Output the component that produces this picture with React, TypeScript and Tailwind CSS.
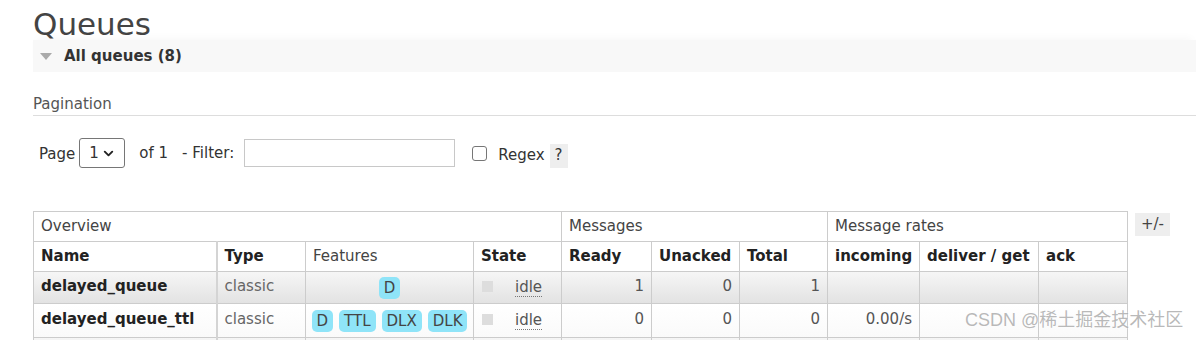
import React from "react";
import { ChevronDown } from "lucide-react";

interface QueueRow {
  name: string;
  type: string;
  features: string[];
  state: string;
  ready: string;
  unacked: string;
  total: string;
  incoming: string;
  deliver: string;
  ack: string;
}

const queues: QueueRow[] = [
  { name: "delayed_queue", type: "classic", features: ["D"], state: "idle", ready: "1", unacked: "0", total: "1", incoming: "", deliver: "", ack: "" },
  { name: "delayed_queue_ttl", type: "classic", features: ["D", "TTL", "DLX", "DLK"], state: "idle", ready: "0", unacked: "0", total: "0", incoming: "0.00/s", deliver: "", ack: "" },
];

const th = "border border-[#ccc] px-[7px] text-left align-middle";
const td = "border border-[#ccc] px-[7px] align-middle";

const App: React.FC = () => {
  return (
    <div className="relative min-h-screen w-full bg-white pl-[33px] font-['DejaVu_Sans',Verdana,sans-serif] text-[15px] text-[#444]">
      <h1 className="pt-[8px] text-[31px] leading-[32px] font-normal text-[#444]">Queues</h1>

      <div className="flex h-[32px] items-center bg-[#f8f8f8] shadow-[0_-6px_8px_-4px_#f8f8f8]">
        <span className="ml-[7px] h-0 w-0 border-x-[6px] border-t-[7px] border-x-transparent border-t-[#aaa]" />
        <span className="ml-[12px] font-bold text-[#333]">All queues (8)</span>
      </div>

      <div className="mt-[23px] border-b border-[#ddd] pb-[2px] leading-[18px] text-[#555]">Pagination</div>

      <div className="mt-[22px] flex h-[30px] items-center text-[#333]">
        <span className="ml-[6px] mt-[2px]">Page</span>
        <div className="ml-[4px] flex h-[30px] w-[46px] items-center justify-between rounded-[3px] border border-[#767676] pl-[9px] pr-[8px]">
          <span>1</span>
          <ChevronDown size={15} strokeWidth={3} className="text-[#222]" />
        </div>
        <span className="ml-[14px] mt-[1px]">of 1</span>
        <span className="ml-[14px]">- Filter:</span>
        <div className="ml-[10px] h-[28px] w-[211px] border border-[#c8c8c8]" />
        <span className="ml-[17px] h-[15px] w-[15px] rounded-[3px] border border-[#767676]" />
        <span className="ml-[11px] mt-[5px]">Regex</span>
        <span className="ml-[5px] mt-[5px] flex h-[24px] w-[18px] items-center justify-center bg-[#eee]">?</span>
      </div>

      <div className="mt-[43px] flex items-start gap-[7px]">
        <table className="w-[1094px] table-fixed border-collapse">
          <colgroup>
            <col className="w-[183px]" />
            <col className="w-[89px]" />
            <col className="w-[168px]" />
            <col className="w-[88px]" />
            <col className="w-[90px]" />
            <col className="w-[88px]" />
            <col className="w-[88px]" />
            <col className="w-[92px]" />
            <col className="w-[119px]" />
            <col className="w-[89px]" />
          </colgroup>
          <thead>
            <tr className="h-[30px]">
              <th colSpan={4} className={`${th} font-normal`}>Overview</th>
              <th colSpan={3} className={`${th} font-normal`}>Messages</th>
              <th colSpan={3} className={`${th} font-normal`}>Message rates</th>
            </tr>
            <tr className="h-[30px] text-[#222]">
              <th className={`${th} border-r-2 border-r-[#d4d4d4] font-bold`}>Name</th>
              <th className={`${th} font-bold`}>Type</th>
              <th className={`${th} font-normal text-[#444]`}>Features</th>
              <th className={`${th} font-bold`}>State</th>
              <th className={`${th} font-bold`}>Ready</th>
              <th className={`${th} font-bold`}>Unacked</th>
              <th className={`${th} font-bold`}>Total</th>
              <th className={`${th} font-bold`}>incoming</th>
              <th className={`${th} font-bold`}>deliver / get</th>
              <th className={`${th} font-bold`}>ack</th>
            </tr>
          </thead>
          <tbody>
            {queues.map((q, i) => (
              <tr
                key={q.name}
                className={
                  i % 2 === 0
                    ? "h-[32px] bg-gradient-to-b from-[#f6f6f6] to-[#e2e2e2]"
                    : "h-[34px] bg-gradient-to-b from-white to-[#fafafa]"
                }
              >
                <td className={`${td} border-r-2 border-r-[#d4d4d4] pb-[3px] font-bold text-[#222]`}>{q.name}</td>
                <td className={`${td} pb-[3px] text-[#666]`}>{q.type}</td>
                <td className={`${td} px-[6px]`}>
                  <div className="flex justify-center gap-[6px]">
                    {q.features.map((f) => (
                      <span key={f} className="rounded-[5px] bg-[#8fe4f8] px-[5px] leading-[22px] text-[#444]">
                        {f}
                      </span>
                    ))}
                  </div>
                </td>
                <td className={td}>
                  <div className="flex items-center">
                    <span className="mb-[3px] ml-[1px] h-[11px] w-[11px] bg-[#ddd]" />
                    <span className="ml-[22px] border-b border-dotted border-[#777] leading-[17px] text-[#555]">{q.state}</span>
                  </div>
                </td>
                <td className={`${td} pb-[3px] text-right text-[#555]`}>{q.ready}</td>
                <td className={`${td} pb-[3px] text-right text-[#555]`}>{q.unacked}</td>
                <td className={`${td} pb-[3px] text-right text-[#555]`}>{q.total}</td>
                <td className={`${td} pb-[3px] text-right text-[#555]`}>{q.incoming}</td>
                <td className={`${td} pb-[3px] text-right text-[#555]`}>{q.deliver}</td>
                <td className={`${td} pb-[3px] text-right text-[#555]`}>{q.ack}</td>
              </tr>
            ))}
            <tr className="h-[32px] bg-gradient-to-b from-[#f6f6f6] to-[#e2e2e2]">
              <td className={`${td} border-r-2 border-r-[#d4d4d4]`} />
              <td className={td} />
              <td className={td} />
              <td className={td} />
              <td className={td} />
              <td className={td} />
              <td className={td} />
              <td className={td} />
              <td className={td} />
              <td className={td} />
            </tr>
          </tbody>
        </table>
        <span className="mt-[2px] flex h-[23px] w-[35px] items-center justify-center bg-[#eee] text-[#444]">+/-</span>
      </div>

      <span className="pointer-events-none absolute left-[965px] top-[307px] font-['Liberation_Sans','Noto_Sans_CJK_SC',sans-serif] text-[18px] text-[#9a9a9a]/70 [text-shadow:0_0_2px_#fff]">
        CSDN @稀土掘金技术社区
      </span>
    </div>
  );
};

export default App;
